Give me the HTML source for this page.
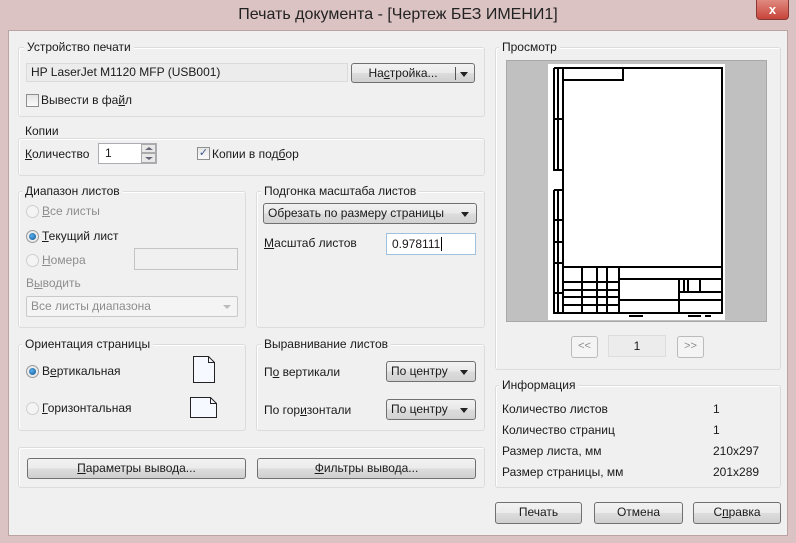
<!DOCTYPE html>
<html><head><meta charset="utf-8"><style>
*{box-sizing:border-box;margin:0;padding:0}
body{width:796px;height:543px;overflow:hidden;background:#dcc3c3;font-family:"Liberation Sans","DejaVu Sans",sans-serif;font-size:12px;color:#1a1a1a;position:relative}
.a{position:absolute}
#client{position:absolute;left:8px;top:30px;width:780px;height:506px;background:#f0f0f0;border:1px solid #b9a3a3}
.grp{position:absolute;border:1px solid #dcdcdc;border-radius:3px;box-shadow:inset 1px 1px 0 #fff}
.lbl{position:absolute;background:#f0f0f0;padding:0 3px;white-space:nowrap}
.t{position:absolute;white-space:nowrap}
.btn{position:absolute;border:1px solid #707070;border-radius:3px;background:linear-gradient(#f2f2f2,#ebebeb 50%,#dddddd 51%,#cfcfcf);text-align:center;line-height:19px}
.fld{position:absolute;border:1px solid #abadb3;background:#fff}
.dis{color:#8d8d8d}
.combo{position:absolute;border:1px solid #707070;border-radius:3px;background:linear-gradient(#f2f2f2,#e8e8e8 50%,#dcdcdc 51%,#d2d2d2);padding-left:4px;line-height:19px}
.combo:after{content:"";position:absolute;right:7px;top:8px;border-left:4px solid transparent;border-right:4px solid transparent;border-top:5px solid #222}
.rad{position:absolute;width:13px;height:13px;border-radius:50%;border:1px solid #9a9a9a;background:radial-gradient(#fff,#dcdcdc)}
.rad.on:after{content:"";position:absolute;left:2px;top:2px;width:7px;height:7px;border-radius:50%;background:radial-gradient(circle at 40% 40%,#5ab0ee,#0b4f88)}
.rad.d{border-color:#cfcfcf;background:#f4f4f4}
.chk{position:absolute;width:13px;height:13px;border:1px solid #8f8f8f;background:linear-gradient(#e6e6e6,#fafafa)}
u{text-decoration:underline}
</style></head><body>
<div class="t" style="left:0;top:6px;width:796px;text-align:center;font-size:16px;color:#222">Печать документа - [Чертеж БЕЗ ИМЕНИ1]</div>
<div class="a" style="left:756px;top:0;width:33px;height:20px;background:linear-gradient(#e08a80,#c7443a);border:1px solid #8a3a34;border-top:none;border-radius:0 0 4px 4px;color:#fff;font-weight:bold;text-align:center;line-height:19px;font-size:13px">x</div>
<div id="client"></div>

<div class="grp" style="left:18px;top:47px;width:467px;height:70px"></div>
<div class="lbl" style="left:24px;top:40px">Устройство печати</div>
<div class="a" style="left:26px;top:63px;width:322px;height:19px;border:1px solid #dadada;background:#ececec;padding-left:4px;line-height:17px">HP LaserJet M1120 MFP (USB001)</div>
<div class="btn" style="left:351px;top:63px;width:124px;height:20px;padding-right:20px">На<u>с</u>тройка...<span class="a" style="left:103px;top:3px;width:1px;height:13px;background:#555"></span><span class="a" style="left:108px;top:8px;border-left:4px solid transparent;border-right:4px solid transparent;border-top:5px solid #222"></span></div>
<div class="chk" style="left:26px;top:94px"></div><div class="t" style="left:41px;top:93px">Вывести в фа<u>й</u>л</div>

<div class="grp" style="left:18px;top:138px;width:467px;height:38px"></div>
<div class="lbl" style="left:22px;top:124px">Копии</div>
<div class="t" style="left:25px;top:147px"><u>К</u>оличество</div>
<div class="fld" style="left:98px;top:143px;width:59px;height:21px;padding:2px 6px">1</div>
<div class="a" style="left:141px;top:144px;width:15px;height:9px;border:1px solid #aaa;background:#e8e8e8"><span class="a" style="left:3px;top:2px;border-left:4px solid transparent;border-right:4px solid transparent;border-bottom:3px solid #667"></span></div>
<div class="a" style="left:141px;top:153px;width:15px;height:10px;border:1px solid #aaa;background:#e8e8e8"><span class="a" style="left:3px;top:3px;border-left:4px solid transparent;border-right:4px solid transparent;border-top:3px solid #667"></span></div>
<div class="chk" style="left:197px;top:147px;font-size:11px;line-height:11px;color:#3b5a8a;text-align:center">✓</div>
<div class="t" style="left:212px;top:147px">Копии в под<u>б</u>ор</div>

<div class="grp" style="left:18px;top:191px;width:228px;height:137px"></div>
<div class="lbl" style="left:22px;top:184px">Диапазон листов</div>
<div class="rad d" style="left:26px;top:205px"></div><div class="t dis" style="left:42px;top:204px"><u>В</u>се листы</div>
<div class="rad on" style="left:26px;top:230px"></div><div class="t" style="left:42px;top:229px"><u>Т</u>екущий лист</div>
<div class="rad d" style="left:26px;top:254px"></div><div class="t dis" style="left:42px;top:253px"><u>Н</u>омера</div>
<div class="a" style="left:134px;top:248px;width:104px;height:22px;border:1px solid #c4c4c4;background:#f0f0f0"></div>
<div class="t dis" style="left:26px;top:276px">В<u>ы</u>водить</div>
<div class="a dis" style="left:26px;top:296px;width:212px;height:21px;border:1px solid #c9c9c9;border-radius:2px;background:#f4f4f4;padding-left:4px;line-height:19px">Все листы диапазона<span class="a" style="right:6px;top:8px;border-left:4px solid transparent;border-right:4px solid transparent;border-top:4px solid #bbb"></span></div>

<div class="grp" style="left:256px;top:191px;width:229px;height:137px"></div>
<div class="lbl" style="left:261px;top:184px">Подгонка масштаба листов</div>
<div class="combo" style="left:263px;top:203px;width:214px;height:21px">Обрезать по размеру страницы</div>
<div class="t" style="left:264px;top:236px"><u>М</u>асштаб листов</div>
<div class="fld" style="left:386px;top:233px;width:90px;height:22px;padding:3px 5px;border-color:#a0c0e0">0.978111<span style="border-left:1px solid #000;margin-left:1px"></span></div>

<div class="grp" style="left:18px;top:344px;width:228px;height:87px"></div>
<div class="lbl" style="left:22px;top:337px">Ориентация страницы</div>
<div class="rad on" style="left:26px;top:365px"></div><div class="t" style="left:42px;top:364px">В<u>е</u>ртикальная</div>
<div class="rad d" style="left:26px;top:402px"></div><div class="t" style="left:42px;top:401px"><u>Г</u>оризонтальная</div>
<svg class="a" style="left:192px;top:355px" width="24" height="29"><path d="M1.5 1.5H16.5L22.5 7.5V27.5H1.5Z" fill="#f6f9ff" stroke="#222"/><path d="M16.5 1.5V7.5H22.5" fill="none" stroke="#222"/></svg>
<svg class="a" style="left:189px;top:396px" width="29" height="23"><path d="M1.5 1.5H21.5L27.5 7.5V21.5H1.5Z" fill="#f6f9ff" stroke="#222"/><path d="M21.5 1.5V7.5H27.5" fill="none" stroke="#222"/></svg>

<div class="grp" style="left:256px;top:344px;width:229px;height:87px"></div>
<div class="lbl" style="left:261px;top:337px">Выравнивание листов</div>
<div class="t" style="left:264px;top:365px">П<u>о</u> вертикали</div>
<div class="combo" style="left:386px;top:361px;width:90px;height:21px">По центру</div>
<div class="t" style="left:264px;top:403px">По гор<u>и</u>зонтали</div>
<div class="combo" style="left:386px;top:399px;width:90px;height:21px">По центру</div>

<div class="grp" style="left:18px;top:447px;width:467px;height:41px"></div>
<div class="btn" style="left:27px;top:458px;width:219px;height:21px"><u>П</u>араметры вывода...</div>
<div class="btn" style="left:257px;top:458px;width:219px;height:21px"><u>Ф</u>ильтры вывода...</div>

<div class="grp" style="left:495px;top:47px;width:286px;height:323px"></div>
<div class="lbl" style="left:499px;top:40px">Просмотр</div>
<div class="a" style="left:506px;top:60px;width:261px;height:262px;background:#c0c0c0;border:1px solid #a8a8a8"></div>
<svg class="a" style="left:548px;top:64px" width="177" height="256" viewBox="548 64 177 256">
<rect x="548" y="64" width="177" height="256" fill="#fff"/>
<g fill="none" stroke="#000" stroke-width="2">
<rect x="563" y="68" width="159" height="245"/>
<path d="M563 80H623V68"/>
<path d="M554 68V170H563M554 68H563M554 119H563M558 68V170"/>
<path d="M554 190V313H563M554 190H563M554 220H563M554 242H563M554 263H563M554 293H563M558 190V313"/>
<path d="M563 267H722M619 279H722M619 300H722M619 267V313M679 279V313M582 267V313M597 267V313M607 267V313"/>
<path d="M563 282H619M563 290H619M563 297H619M563 305H619M679 292H722M700 279V292"/>
<path d="M688 279V292M684 279V292"/>
<path d="M629 316H643M688 316H701M705 316H711"/>
</g>
</svg>
<div class="btn dis" style="left:571px;top:336px;width:27px;height:22px;border-color:#bbb;background:#f4f4f4;font-size:11px">&lt;&lt;</div>
<div class="a" style="left:608px;top:335px;width:58px;height:22px;border:1px solid #ddd;background:#ececec;text-align:center;line-height:20px">1</div>
<div class="btn dis" style="left:677px;top:336px;width:27px;height:22px;border-color:#bbb;background:#f4f4f4;font-size:11px">&gt;&gt;</div>

<div class="grp" style="left:495px;top:385px;width:286px;height:103px"></div>
<div class="lbl" style="left:499px;top:378px">Информация</div>
<div class="t" style="left:502px;top:402px">Количество листов</div><div class="t" style="left:713px;top:402px">1</div>
<div class="t" style="left:502px;top:423px">Количество страниц</div><div class="t" style="left:713px;top:423px">1</div>
<div class="t" style="left:502px;top:444px">Размер листа, мм</div><div class="t" style="left:713px;top:444px">210x297</div>
<div class="t" style="left:502px;top:465px">Размер страницы, мм</div><div class="t" style="left:713px;top:465px">201x289</div>

<div class="btn" style="left:495px;top:502px;width:87px;height:22px">Печать</div>
<div class="btn" style="left:594px;top:502px;width:89px;height:22px">Отмена</div>
<div class="btn" style="left:693px;top:502px;width:88px;height:22px">С<u>п</u>равка</div>
</body></html>
